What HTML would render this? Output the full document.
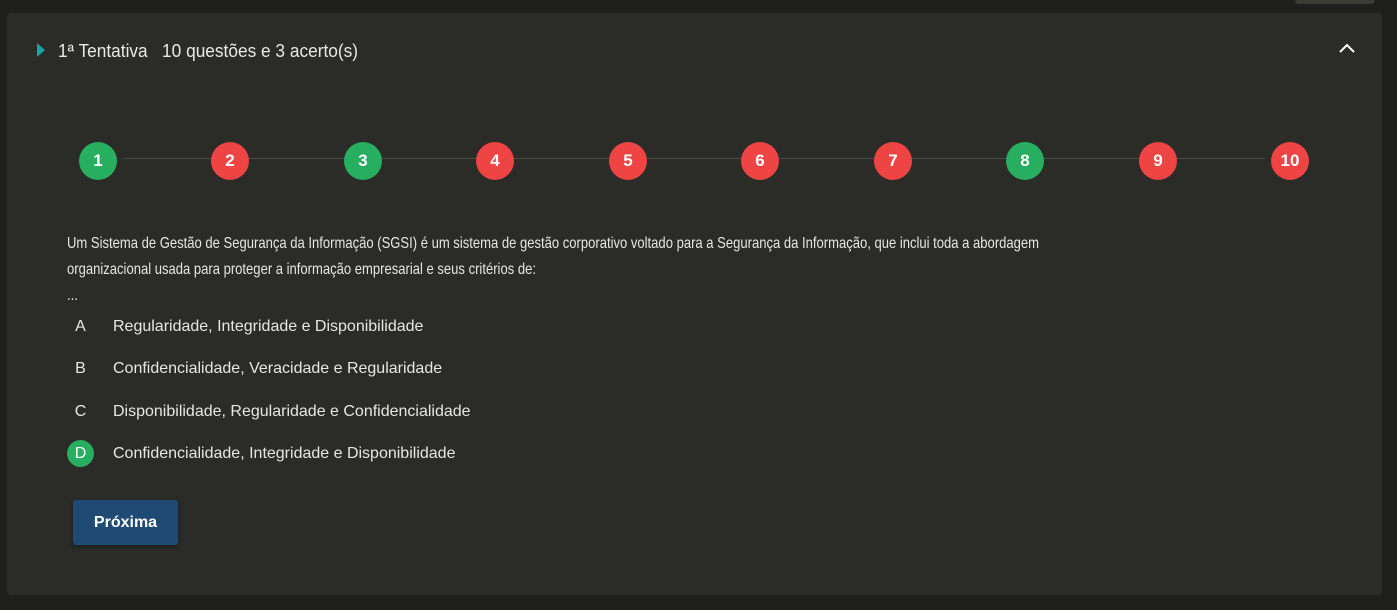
<!DOCTYPE html>
<html><head><meta charset="utf-8"><style>
html,body{margin:0;padding:0;width:1397px;height:610px;background:#1f1f1d;overflow:hidden;font-family:"Liberation Sans",sans-serif;color:#e6e6e6}
.tab{position:absolute;left:1295px;top:-6px;width:80px;height:10px;background:#3a3a37;border-radius:4px}
.card{position:absolute;left:7px;top:13px;width:1375px;height:582px;background:#2b2b28;border-radius:4px}
.hdr{position:absolute;left:58px;top:41px;font-size:18px;color:#e8e8e8;transform:scaleX(0.96);transform-origin:left;white-space:nowrap}
.tri{position:absolute;left:37px;top:43px;width:0;height:0;border-top:7px solid transparent;border-bottom:7px solid transparent;border-left:8px solid #1aa3a0}
.chev{position:absolute;left:1338px;top:42px}
.line{position:absolute;top:158px;height:1px;background:#4a4a46}
.c{position:absolute;top:142px;width:38px;height:38px;border-radius:50%;color:#fff;font-weight:bold;font-size:17px;text-align:center;line-height:38px}
.g{background:#27ae60}.r{background:#ef4444}
.q{position:absolute;left:67px;top:231px;font-size:16px;line-height:26px;color:#e6e6e6;width:1200px;transform:scaleX(0.815);transform-origin:left top}
.opt{position:absolute;left:67px;font-size:16px;color:#e6e6e6;white-space:nowrap}
.opt .l{display:inline-block;width:27px;height:27px;line-height:27px;text-align:center;border-radius:50%;margin-right:19px}
.btn{position:absolute;left:73px;top:500px;width:105px;height:45px;background:#1f4a73;border-radius:3px;color:#fff;font-weight:bold;font-size:16px;text-align:center;line-height:45px;box-shadow:0 2px 4px rgba(0,0,0,.4)}
</style></head><body>
<div class="tab"></div>
<div class="card"></div>
<div class="tri"></div>
<div class="hdr">1ª Tentativa&nbsp;&nbsp;&nbsp;10 questões e 3 acerto(s)</div>
<svg class="chev" width="18" height="12" viewBox="0 0 18 12"><path d="M2 10 L9 3 L16 10" fill="none" stroke="#fff" stroke-width="2"/></svg>
<div class="line" style="left:123px;width:1142px"></div>
<div class="c g" style="left:79px">1</div>
<div class="c r" style="left:211px">2</div>
<div class="c g" style="left:344px">3</div>
<div class="c r" style="left:476px">4</div>
<div class="c r" style="left:609px">5</div>
<div class="c r" style="left:741px">6</div>
<div class="c r" style="left:874px">7</div>
<div class="c g" style="left:1006px">8</div>
<div class="c r" style="left:1139px">9</div>
<div class="c r" style="left:1271px">10</div>
<div class="q">Um Sistema de Gestão de Segurança da Informação (SGSI) é um sistema de gestão corporativo voltado para a Segurança da Informação, que inclui toda a abordagem<br>organizacional usada para proteger a informação empresarial e seus critérios de:<br>...</div>
<div class="opt" style="top:313px"><span class="l">A</span>Regularidade, Integridade e Disponibilidade</div>
<div class="opt" style="top:355px"><span class="l">B</span>Confidencialidade, Veracidade e Regularidade</div>
<div class="opt" style="top:398px"><span class="l">C</span>Disponibilidade, Regularidade e Confidencialidade</div>
<div class="opt" style="top:440px"><span class="l" style="background:#27ae60;color:#fff">D</span>Confidencialidade, Integridade e Disponibilidade</div>
<div class="btn">Próxima</div>
</body></html>
